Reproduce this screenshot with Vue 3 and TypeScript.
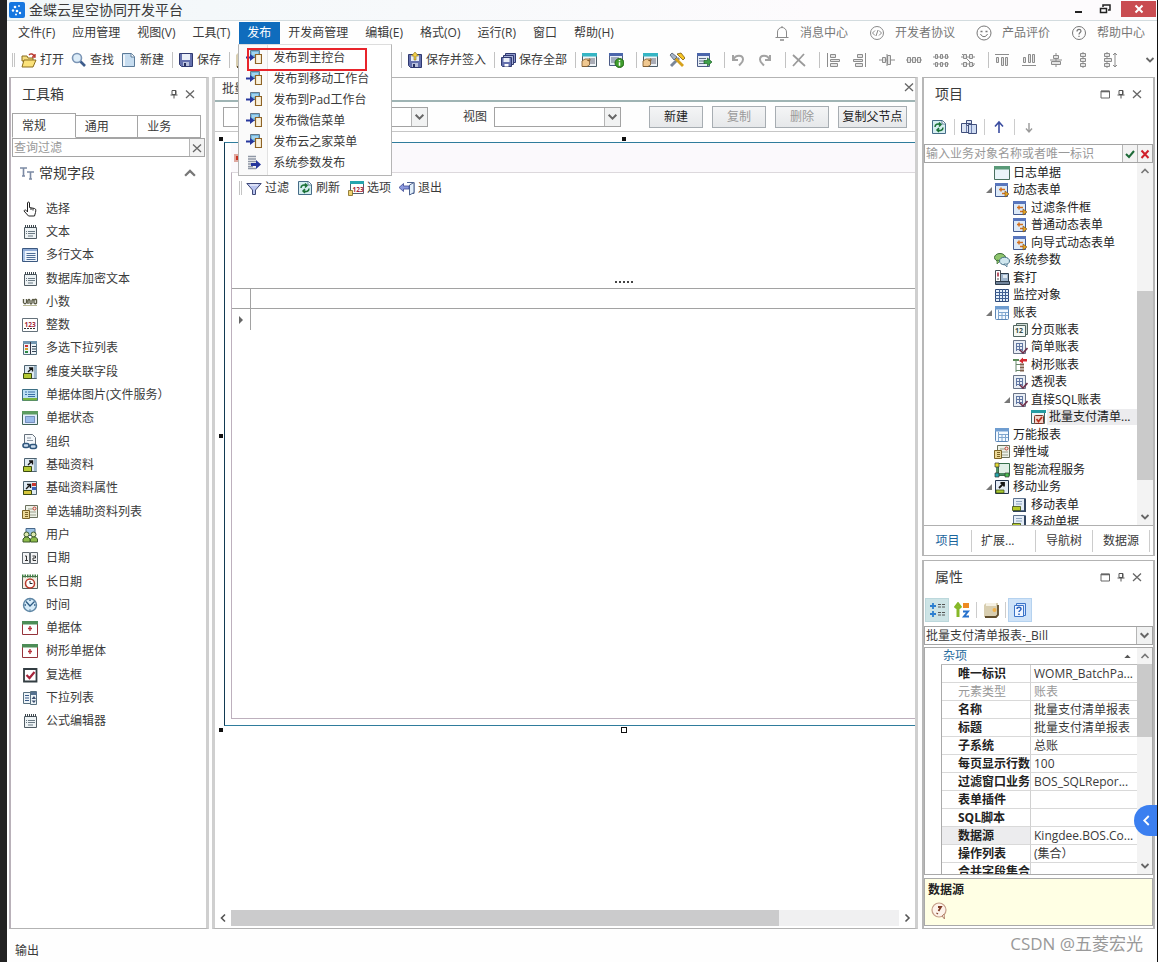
<script setup lang="ts">
import { ref } from 'vue'

interface TreeRow {
  label: string
  icon: string
  level: number
  open?: boolean
  selected?: boolean
}
interface PropRow {
  name: string
  value: string
  muted?: boolean
  selected?: boolean
}

const menusBefore = ['文件(F)', '应用管理', '视图(V)', '工具(T)']
const menusAfter = ['开发商管理', '编辑(E)', '格式(O)', '运行(R)', '窗口', '帮助(H)']
const links = [
  { icon: 'bell', label: '消息中心' },
  { icon: 'code', label: '开发者协议' },
  { icon: 'smile', label: '产品评价' },
  { icon: 'help', label: '帮助中心' },
]
const publishItems = [
  { icon: 'publish', label: '发布到主控台' },
  { icon: 'publish', label: '发布到移动工作台' },
  { icon: 'publish', label: '发布到Pad工作台' },
  { icon: 'publish', label: '发布微信菜单' },
  { icon: 'publish', label: '发布云之家菜单' },
  { icon: 'sysparam', label: '系统参数发布' },
]
const iconGroups = [
  ['formhand', 'docinfo'],
  ['formhand', 'tools', 'docarrow'],
  ['undo', 'redo'],
  ['cross'],
  ['al-left', 'al-right', 'al-center', 'al-hgap', 'al-hgrow', 'al-hshrink'],
  ['al-top', 'al-bottom', 'al-middle', 'al-vgap', 'al-vgrow'],
]
const tools = [
  ['hand', '选择'],
  ['note', '文本'],
  ['lines', '多行文本'],
  ['note', '数据库加密文本'],
  ['decimal', '小数'],
  ['num', '整数'],
  ['multilist', '多选下拉列表'],
  ['assoc', '维度关联字段'],
  ['image', '单据体图片(文件服务）'],
  ['status', '单据状态'],
  ['org', '组织'],
  ['assoc', '基础资料'],
  ['baseattr', '基础资料属性'],
  ['aux', '单选辅助资料列表'],
  ['user', '用户'],
  ['date', '日期'],
  ['longdate', '长日期'],
  ['clock', '时间'],
  ['entry', '单据体'],
  ['entry', '树形单据体'],
  ['checkbox', '复选框'],
  ['droplist', '下拉列表'],
  ['note', '公式编辑器'],
]
const tree: TreeRow[] = [
  { label: '日志单据', icon: 'window', level: 0 },
  { label: '动态表单', icon: 'dynform', level: 0, open: true },
  { label: '过滤条件框', icon: 'dynform', level: 1 },
  { label: '普通动态表单', icon: 'dynform', level: 1 },
  { label: '向导式动态表单', icon: 'dynform', level: 1 },
  { label: '系统参数', icon: 'chat', level: 0 },
  { label: '套打', icon: 'print', level: 0 },
  { label: '监控对象', icon: 'monitor', level: 0 },
  { label: '账表', icon: 'sheet', level: 0, open: true },
  { label: '分页账表', icon: 'pages', level: 1 },
  { label: '简单账表', icon: 'tablecheck', level: 1 },
  { label: '树形账表', icon: 'treesheet', level: 1 },
  { label: '透视表', icon: 'tablecheck', level: 1 },
  { label: '直接SQL账表', icon: 'tablecheck', level: 1, open: true },
  { label: '批量支付清单...', icon: 'report', level: 2, selected: true },
  { label: '万能报表', icon: 'sheet', level: 0 },
  { label: '弹性域', icon: 'aux', level: 0 },
  { label: '智能流程服务', icon: 'flow', level: 0 },
  { label: '移动业务', icon: 'mobile', level: 0, open: true },
  { label: '移动表单', icon: 'mobform', level: 1 },
  { label: '移动单据', icon: 'mobform', level: 1 },
]
const props: PropRow[] = [
  { name: '唯一标识', value: 'WOMR_BatchPa...' },
  { name: '元素类型', value: '账表', muted: true },
  { name: '名称', value: '批量支付清单报表' },
  { name: '标题', value: '批量支付清单报表' },
  { name: '子系统', value: '总账' },
  { name: '每页显示行数', value: '100' },
  { name: '过滤窗口业务', value: 'BOS_SQLRepor...' },
  { name: '表单插件', value: '' },
  { name: 'SQL脚本', value: '' },
  { name: '数据源', value: 'Kingdee.BOS.Co...', selected: true },
  { name: '操作列表', value: '(集合）' },
  { name: '合并字段集合', value: '' },
]
const toolTab = ref('常规')
const projectTab = ref('项目')
const toolQuery = ref('')
const projectQuery = ref('')
</script>

<template>
  <div class="app">
    <svg class="sprite" aria-hidden="true">
      <defs>
        <symbol id="i-open" viewBox="0 0 16 16"><path d="M1 4h5l1 2h5v3H1z" fill="#f3dc7e" stroke="#8a6d1c" /><path d="M3 8h12l-3 7H1z" fill="#fbe27a" stroke="#8a6d1c" /><path d="M8 3c2-2 4-1 5 1m1-2v3h-3" fill="none" stroke="#b8332a" stroke-width="1.4" /></symbol>
        <symbol id="i-find" viewBox="0 0 16 16"><circle cx="6" cy="6" r="4.500" fill="#dcecf8" stroke="#7b95b5" stroke-width="1.600" /><path d="M9.500 9.500L14 14" stroke="#3d5c8c" stroke-width="2.600" /></symbol>
        <symbol id="i-new" viewBox="0 0 16 16"><path d="M1.500 1.500h9l3 3v10h-12z" fill="#c6dcef" stroke="#5b7a98" /><path d="M10 1.500v3.500h3.500" fill="#fff" stroke="#5b7a98" /><path d="M3 3v11" stroke="#fff" stroke-width="1.500" /></symbol>
        <symbol id="i-save" viewBox="0 0 16 16"><path d="M1.500 1.500h13v13h-11l-2-2z" fill="#6470ad" stroke="#2f3970" /><path d="M4 2h8v6H4z" fill="#e9eef8" /><path d="M5 10h6v4H5z" fill="#b9c1dd" /><path d="M6 11h2v3H6z" fill="#28305f" /></symbol>
        <symbol id="i-checkin" viewBox="0 0 16 16"><path d="M1.500 2.500h13v13h-11l-2-2z" fill="#6470ad" stroke="#2f3970" /><path d="M4 3h8v6H4z" fill="#e9eef8" /><path d="M5 11h6v4H5z" fill="#b9c1dd" /><path d="M6 12h2v3H6z" fill="#28305f" /><path d="M8 0l3.500 4H9v4H7V4H4.500z" fill="#f0cd45" stroke="#8e731d" stroke-width=".6" /></symbol>
        <symbol id="i-saveall" viewBox="0 0 16 16"><path d="M5.500 1.500h10v9h-10z" fill="#8d98cb" stroke="#2f3970" /><path d="M3.500 3.500h10v9h-10z" fill="#a5afd8" stroke="#2f3970" /><path d="M1.500 5.500h10v9h-9l-1-1z" fill="#6470ad" stroke="#2f3970" /><path d="M3.500 6h6v4h-6z" fill="#e9eef8" /><path d="M4.500 12h4v2.500h-4z" fill="#fff" /></symbol>
        <symbol id="i-formhand" viewBox="0 0 16 16"><path d="M1.500 1.500h14v13h-14z" fill="#eef3f6" stroke="#4b5b66" /><path d="M1 1h15v3.500H1z" fill="#35b5c4" /><path d="M8 7h6M9 9h5M9 11h5" stroke="#667" /><path d="M1 9l3-2h5v1.500H6.500l2 .5v4L6 14.500H1z" fill="#f0c890" stroke="#7a5222" stroke-width=".8" /></symbol>
        <symbol id="i-docinfo" viewBox="0 0 16 16"><path d="M1.500 1.500h13v12h-13z" fill="#e6edf7" stroke="#4b5b86" /><path d="M1 1h14v3H1z" fill="#4b66ab" /><path d="M3 6h8M3 8h6M3 10h5" stroke="#5c6d85" /><circle cx="11.500" cy="11" r="4.500" fill="#3f9d2c" stroke="#226417" /><path d="M11.500 8v1.200M11.500 10.200v3.500" stroke="#fff" stroke-width="1.500" /></symbol>
        <symbol id="i-tools" viewBox="0 0 16 16"><path d="M2 14l8-8" stroke="#7a8698" stroke-width="3" /><path d="M14 14L5 5" stroke="#d6a11c" stroke-width="2.800" /><path d="M1 3l2-2 5 4-3 3z" fill="#a7b5c8" stroke="#4d5a6b" stroke-width=".8" /><path d="M8 2l4-1 4 5-2 2-4-4z" fill="#f7c526" stroke="#7b5b10" stroke-width=".8" /></symbol>
        <symbol id="i-docarrow" viewBox="0 0 16 16"><path d="M1.500 1.500h12v13h-12z" fill="#e6edf7" stroke="#4b5b86" /><path d="M1 1h13v3H1z" fill="#4b66ab" /><path d="M3 6.500h7M3 9h6M3 11.500h6" stroke="#5c6d85" /><path d="M8 8.500h3.500V6L16 10l-4.500 4v-2.500H8z" fill="#3fa04a" stroke="#1d6427" stroke-width=".7" /></symbol>
        <symbol id="i-undo" viewBox="0 0 16 16"><path d="M3 3v5h5M3.500 7.500c2-5 9.500-5 9.500 0 0 3-2 4-4 6" fill="none" stroke="#a3a3a3" stroke-width="2" /></symbol>
        <symbol id="i-redo" viewBox="0 0 16 16"><path d="M13 3v5H8M12.500 7.500c-2-5-9.500-5-9.500 0 0 3 2 4 4 6" fill="none" stroke="#a3a3a3" stroke-width="2" /></symbol>
        <symbol id="i-cross" viewBox="0 0 16 16"><path d="M2 3l12 11M13 2L2 14" stroke="#9a9a9a" stroke-width="1.800" /></symbol>
        <g fill="#e4e4e4" stroke="#8c8c8c">
          <symbol id="i-al-left" viewBox="0 0 16 16"><path d="M2.500 1v14" /><path d="M5.500 2.500h5v3h-5zM5.500 7.500h9v2h-9zM5.500 11.500h7v3h-7z" /></symbol>
          <symbol id="i-al-right" viewBox="0 0 16 16"><path d="M13.500 1v14" /><path d="M5.500 2.500h5v3h-5zM1.500 7.500h9v2h-9zM3.500 11.500h7v3h-7z" /></symbol>
          <symbol id="i-al-center" viewBox="0 0 16 16"><path d="M0 8h16M8 2v12" /><path d="M3.500 5.500h3v5h-3zM8.500 3.500h3v9h-3z" /></symbol>
          <symbol id="i-al-hgap" viewBox="0 0 16 16"><path d="M0 8h16" /><path d="M1.500 5.500h3v5h-3zM6.500 5.500h3v5h-3zM11.500 5.500h3v5h-3z" /></symbol>
          <symbol id="i-al-hgrow" viewBox="0 0 16 16"><path d="M0 5h16M0 12h16" /><path d="M2.500 2.500h2v4h-2zM7.500 2.500h2v4h-2zM12.500 2.500h2v4h-2zM2.500 10.500h2v4h-2zM7.500 10.500h2v4h-2zM12.500 10.500h2v4h-2z" /></symbol>
          <symbol id="i-al-hshrink" viewBox="0 0 16 16"><path d="M1 5h14M1 12h14M2 2l12 12" /><path d="M3.500 2.500h3v4h-3zM9.500 2.500h3v4h-3zM3.500 10.500h3v4h-3zM9.500 10.500h3v4h-3z" /></symbol>
          <symbol id="i-al-top" viewBox="0 0 16 16"><path d="M1 2.500h14" /><path d="M2.500 5.500h2v5h-2zM7.500 5.500h2v8h-2zM11.500 5.500h2v8h-2z" /></symbol>
          <symbol id="i-al-bottom" viewBox="0 0 16 16"><path d="M1 13.500h14" /><path d="M2.500 5.500h2v5h-2zM7.500 2.500h2v8h-2zM11.500 2.500h2v8h-2z" /></symbol>
          <symbol id="i-al-middle" viewBox="0 0 16 16"><path d="M8 1v14M2 8h12" /><path d="M5.500 3.500h5v3h-5zM3.500 9.500h9v3h-9z" /></symbol>
          <symbol id="i-al-vgap" viewBox="0 0 16 16"><path d="M8 0v16" /><path d="M5.500 1.500h5v3h-5zM5.500 6.500h5v3h-5zM5.500 11.500h5v3h-5z" /></symbol>
          <symbol id="i-al-vgrow" viewBox="0 0 16 16"><path d="M5 0v16M13 1v14M11 3l2-2 2 2M11 13l2 2 2-2" /><path d="M2.500 1.500h5v3h-5zM2.500 6.500h7v3h-7zM2.500 11.500h5v3h-5z" /></symbol>
        </g>
        <symbol id="i-bell" viewBox="0 0 16 16"><path d="M1.500 12.500h13M3.500 12V7a4.500 4.500 0 0 1 9 0v5M8 1v1.500" fill="none" stroke="#8a8a8a" /><path d="M6 15h4" stroke="#8a8a8a" stroke-width="1.500" /></symbol>
        <symbol id="i-code" viewBox="0 0 16 16"><circle cx="8" cy="8" r="6.500" fill="none" stroke="#8a8a8a" /><path d="M6 5.500L3.500 8 6 10.500M10 5.500L12.500 8 10 10.500M9 5l-2 6" fill="none" stroke="#8a8a8a" /></symbol>
        <symbol id="i-smile" viewBox="0 0 16 16"><circle cx="8" cy="8" r="7" fill="none" stroke="#777" /><path d="M4.500 9c1.500 3.500 5.500 3.500 7 0" fill="none" stroke="#777" /><path d="M4.500 6.500h2M9.500 6.500h2" stroke="#777" stroke-width="1.300" /></symbol>
        <symbol id="i-help" viewBox="0 0 16 16"><circle cx="8" cy="8" r="6.500" fill="none" stroke="#777" /><path d="M6 6.500c0-3 4-2.500 4-.5 0 1.500-2 1.500-2 3.500M8 10.800v1.200" fill="none" stroke="#777" stroke-width="1.200" /></symbol>
        <symbol id="i-publish" viewBox="0 0 16 16"><path d="M4.500.5h9v7h-9z" fill="#72b5dc" stroke="#66798a" /><path d="M6 2h6v3H6z" fill="#a3d4ef" /><path d="M9.500 4.500h6v9h-6z" fill="#fbf3df" stroke="#8e6325" stroke-width="1.200" /><path d="M0 6.500h4V4l4.500 3.500L4 11V8.500H0z" fill="#26379d" /></symbol>
        <symbol id="i-sysparam" viewBox="0 0 16 16"><path d="M2 1.500h8M2 4h8M2 6.500h8M2 9h5M2 11.500h5M2 13.500h8" stroke="#8f97a5" stroke-width="1.300" /><path d="M5 8h5V5l5 4.500-5 4.500v-3H5z" fill="#26379d" /></symbol>
        <symbol id="i-funnel" viewBox="0 0 16 16"><path d="M.8 3.500h14.400L9.500 10v4.500h-3V10z" fill="#b9c4ef" stroke="#404a78" /><path d="M4 5h8" stroke="#fff" /></symbol>
        <symbol id="i-refresh" viewBox="0 0 16 16"><path d="M1.500 1.500h10l3 3v10h-13z" fill="#d5eef0" stroke="#466c88" /><path d="M11 1.500v3.500h3.500" fill="#fff" stroke="#466c88" stroke-width=".8" /><path d="M4 8c0-3 3-3.500 5-2.500M8 3.500l2 2-2 2M12 8.500c0 3-3 3.500-5 2.500M8 9l-2 2 2 2" fill="none" stroke="#1a7136" stroke-width="1.500" /></symbol>
        <symbol id="i-options" viewBox="0 0 16 16"><path d="M2.500 1.500h13v12h-13z" fill="#fff" stroke="#52606b" /><path d="M2 1h14v3H2z" fill="#25a5ae" /><text x="4.500" y="11.500" font-size="6.500" font-weight="700" fill="#a11f35">123</text><path d="M.5 10.500h4v5h-4z" fill="#efd374" stroke="#7e661d" stroke-width=".8" /></symbol>
        <symbol id="i-exit" viewBox="0 0 16 16"><path d="M8 2.500h7v11h-2" fill="none" stroke="#4f6491" /><path d="M15 2.500l-4.500 2.500v10l4.500-2.500z" fill="#e3effa" stroke="#4f6491" /><path d="M0 7.500L4.500 3.500v2.500H10v3H4.500v2.500z" fill="#8c9ade" stroke="#3f4a94" stroke-width=".8" /></symbol>
        <symbol id="i-tt" viewBox="0 0 16 16"><path d="M1 3h7M4.500 3v8M3 11h3" stroke="#7c8aa4" stroke-width="1.600" /><path d="M8 7h7M11.500 7v7M10 14h3" stroke="#7c8aa4" stroke-width="1.600" /></symbol>
        <symbol id="i-hand" viewBox="0 0 16 16"><path d="M5.500 9V2c0-1.300 2-1.300 2 0v4.500l5 1c1.500.5 1.500 1.500 1 4l-1 3.500H6.500L2 10c.5-1.500 2-1.500 3.500 1z" fill="#fff" stroke="#222" /><path d="M9 7v2M11 7.500v2" stroke="#222" /></symbol>
        <symbol id="i-note" viewBox="0 0 16 16"><path d="M2.500 3.500h12v11h-12z" fill="#edf2f4" stroke="#4f5a62" /><path d="M3.500 1v3M5.500 1v3M7.500 1v3M9.500 1v3M11.500 1v3M13.500 1v3" stroke="#404a50" /><path d="M4 7.500h1M6 7.500h7M4 9.500h1M6 9.500h7M6 12h5" stroke="#6b7a85" /></symbol>
        <symbol id="i-lines" viewBox="0 0 16 16"><path d="M.5 1.500h15v13H.5z" fill="#eff5fc" stroke="#3b5880" /><path d="M1 2h14v2H1z" fill="#8fabd6" /><path d="M1 4h2v10H1z" fill="#a9c3e6" /><path d="M4.500 6.500h9M4.500 8.500h9M4.500 10.500h9M4.500 12.500h9" stroke="#4e6d96" /></symbol>
        <symbol id="i-decimal" viewBox="0 0 16 16"><path d="M1.500 5v3.500q1.500 2.500 3 0V5M6 10V6.500q1-2 2 0V9q1 2 2 0V6.500q1-2 2 0V9q1.500 1.500 2.500 0V6q-1-1.500-2 0" fill="none" stroke="#5a5a44" stroke-width="1.400" /><path d="M1 11.500h14" stroke="#b9b896" /></symbol>
        <symbol id="i-num" viewBox="0 0 16 16"><path d="M.5 1.500h15v13H.5z" fill="#fff" stroke="#64717a" /><text x="2.500" y="9.500" font-size="6.500" font-weight="700" fill="#a11f35">123</text><path d="M2 11.500h12" stroke="#333" stroke-dasharray="2 1" /></symbol>
        <symbol id="i-multilist" viewBox="0 0 16 16"><path d="M1.500 1.500h13v13h-13z" fill="#edf4f8" stroke="#57707f" /><path d="M1 1h14v3H1z" fill="#7296b0" /><path d="M8.500 2v12" stroke="#334" /><path d="M3 6h3" stroke="#c33" stroke-width="2" /><path d="M3 9h3" stroke="#d69a28" stroke-width="2" /><path d="M3 12h3" stroke="#2c8a45" stroke-width="2" /><path d="M10 6.500h4M10 9h4M10 11.500h4" stroke="#345" /></symbol>
        <symbol id="i-assoc" viewBox="0 0 16 16"><path d="M2.500 1.500h12v13h-12z" fill="#dfeaf2" stroke="#4d6270" /><path d="M12 2h3v12h-3z" fill="#9fb8ca" /><path d="M6 8l4-4M7 4h3.500v3.500" fill="none" stroke="#151515" stroke-width="1.400" /><path d="M1.500 9.500h8v5h-8z" fill="#b4c934" stroke="#3b4b10" /></symbol>
        <symbol id="i-image" viewBox="0 0 16 16"><path d="M.5 2.500h15v11H.5z" fill="#bde0f4" stroke="#3d6f84" /><path d="M1 11h14v2.500H1z" fill="#78b441" /><path d="M3 5h2M6 5h7M3 7.500h2M6 7.500h7M6 9.500h7" stroke="#3a6fa5" /></symbol>
        <symbol id="i-status" viewBox="0 0 16 16"><path d="M.5 1.500h15v13H.5z" fill="#e3eefc" stroke="#3f6256" /><path d="M0 1h16v3.500H0z" fill="#5d9c61" /><path d="M3.500 6.500h9v6h-9z" fill="#9bbbea" stroke="#2e4d86" stroke-dasharray="1 1" /></symbol>
        <symbol id="i-org" viewBox="0 0 16 16"><path d="M2.500.5h8l3 3v9h-11z" fill="#f5f8fb" stroke="#66717c" /><path d="M5 4h4M5 6.500h6" stroke="#8a96a3" /><rect x="1" y="9.500" width="6" height="4" rx="2" fill="#cde" stroke="#2f567c" stroke-width="1.600" /><rect x="8" y="10.500" width="6.500" height="4" rx="2" fill="#cde" stroke="#2f567c" stroke-width="1.600" /></symbol>
        <symbol id="i-baseattr" viewBox="0 0 16 16"><path d="M1.500 1.500h13v13h-13z" fill="#dfeaf2" stroke="#4d6270" /><path d="M4 9l4-4M5 4.500h3.500V8" fill="none" stroke="#151515" stroke-width="1.400" /><path d="M10 3h4v3h-4z" fill="#c9362f" /><path d="M10 7h4v3h-4z" fill="#3c5fb8" /><path d="M1.500 10.500h8v4h-8z" fill="#d6c63c" stroke="#3b4b10" /></symbol>
        <symbol id="i-aux" viewBox="0 0 16 16"><path d="M3.500 1.500h12v12h-12z" fill="#eef2e8" stroke="#6a705e" /><path d="M6 5h5M8 8h6M8 11h6" stroke="#9a9f8c" /><circle cx="12.500" cy="4.500" r="1.500" fill="none" stroke="#c23b30" /><path d="M.5 6.500h7v8h-7z" fill="#ecd897" stroke="#7d6426" /><path d="M3 8.500h3M3 10.500h3M3 12.500h3" stroke="#7d6426" /></symbol>
        <symbol id="i-user" viewBox="0 0 16 16"><path d="M4 1.500h9v7H4z" fill="#9dc2e4" stroke="#48688b" /><circle cx="4.500" cy="7.500" r="2.500" fill="#dce8b0" stroke="#3c5a2b" /><path d="M1 15v-3l2-2h3l2 2v3z" fill="#8dbb4b" stroke="#3c5a2b" /><circle cx="11.500" cy="7.500" r="2.500" fill="#dce8b0" stroke="#3c5a2b" /><path d="M8.500 15v-3l2-2h3l2 2v3z" fill="#8dbb4b" stroke="#3c5a2b" /></symbol>
        <symbol id="i-date" viewBox="0 0 16 16"><path d="M.5 2.500h7v11h-7zM8.500 2.500h7v11h-7z" fill="#f2f3f4" stroke="#626a70" /><path d="M3 6h1.500v4M3 10.500h3M10.500 6h3v2H11v2.500h3" fill="none" stroke="#333" /></symbol>
        <symbol id="i-longdate" viewBox="0 0 16 16"><path d="M.5 2.500h15v12H.5z" fill="#f5eee4" stroke="#55605a" /><path d="M0 2h16" stroke="#3f8142" stroke-width="3" stroke-dasharray="1.500 1" /><circle cx="8" cy="9.500" r="4.500" fill="#fff" stroke="#b93a2b" stroke-width="1.500" /><path d="M8 7v2.500h2.500" fill="none" stroke="#222" /></symbol>
        <symbol id="i-clock" viewBox="0 0 16 16"><circle cx="8" cy="8" r="6.500" fill="#d6ebf8" stroke="#5e86a5" stroke-width="1.400" /><path d="M4 4.500L8 9l4.500-4.500M8 2.500v1.500M8 12.500v1M2.500 8H4M12 8h1.500" fill="none" stroke="#2e5c84" stroke-width="1.300" /></symbol>
        <symbol id="i-entry" viewBox="0 0 16 16"><path d="M.5 1.500h15v13H.5z" fill="#fff" stroke="#96333b" /><path d="M0 1h16v3.500H0z" fill="#4d8d57" /><path d="M8 6v5M6 8.500h4" stroke="#b7323b" stroke-width="1.400" /></symbol>
        <symbol id="i-checkbox" viewBox="0 0 16 16"><path d="M2 2h12.500v12.500H2z" fill="#fff" stroke="#333d42" stroke-width="1.800" /><path d="M4.500 8l3 3 5-6" fill="none" stroke="#a6243b" stroke-width="2.200" /></symbol>
        <symbol id="i-droplist" viewBox="0 0 16 16"><path d="M1.500 2.500h7v11h-7zM8.500 1.500h6v13h-6z" fill="#edf4f8" stroke="#57707f" /><path d="M9 2h6v3H9z" fill="#55718f" /><path d="M3 5.500h4M3 8h4M3 10.500h4" stroke="#3b5b88" /><path d="M9.500 9L12 6l2 3zM9.500 10.500h4.500L12 13z" fill="#3b4f70" /></symbol>
        <symbol id="i-window" viewBox="0 0 16 16"><path d="M.5 1.500h15v13H.5z" fill="#eaf4fa" stroke="#48705f" /><path d="M0 1h16v3.500H0z" fill="#5a9a78" /></symbol>
        <symbol id="i-dynform" viewBox="0 0 16 16"><path d="M1.500 1.500h12v13h-12z" fill="#dce9f8" stroke="#41598f" /><path d="M1 1h13v3H1z" fill="#5876bd" /><path d="M5 7.500h6M7 5.500v4M8 11.500h5" stroke="#d3701d" stroke-width="1.500" /><path d="M11 9l4 3-4 3z" fill="#e8a824" stroke="#7a4a12" stroke-width=".6" /></symbol>
        <symbol id="i-chat" viewBox="0 0 16 16"><ellipse cx="6" cy="5.500" rx="5.500" ry="4" fill="#8fc56d" stroke="#3b6b36" /><path d="M3 8v4l3-3z" fill="#8fc56d" stroke="#3b6b36" stroke-width=".7" /><ellipse cx="10.500" cy="9" rx="5" ry="3.800" fill="#cfe6ee" stroke="#456f86" /><path d="M10 12l3 3v-3z" fill="#cfe6ee" stroke="#456f86" stroke-width=".7" /></symbol>
        <symbol id="i-print" viewBox="0 0 16 16"><path d="M6.500 3.500h8v8h-8z" fill="#9fb5cc" stroke="#2d3b4b" /><path d="M1.500.5h5v12h-5z" fill="#fff" stroke="#444c55" /><path d="M4 2.500v4" stroke="#a11f35" stroke-width="1.500" /><path d="M3 9h2" stroke="#555" /><path d="M1.500 11.500h14v3h-14z" fill="#70839a" stroke="#2d3b4b" /><path d="M9 5h4v3H9z" fill="#dfe9f2" /></symbol>
        <symbol id="i-monitor" viewBox="0 0 16 16"><path d="M1.500 2.500h13v12h-13z" fill="#e3effa" stroke="#2f4a78" /><path d="M5.500 2v12M8.500 2v12M11.500 2v12M1 5.500h14M1 8.500h14M1 11.500h14" stroke="#3f5f92" /></symbol>
        <symbol id="i-sheet" viewBox="0 0 16 16"><rect x="1.500" y="1.500" width="13" height="13" rx="1" fill="#f3f9ff" stroke="#5b86b6" /><path d="M1 1h14v3.500H1z" fill="#6f9dd0" /><path d="M4.500 5v9M8 7v7M11.500 7v7M4 7.500h10M4 10.500h10" stroke="#7fa6cf" /></symbol>
        <symbol id="i-pages" viewBox="0 0 16 16"><path d="M4.500 1.500h11v11h-11z" fill="#cfdad5" stroke="#526660" /><path d="M1.500 3.500h12v11h-12z" fill="#f4f8f4" stroke="#526660" /><text x="3" y="11" font-size="7" font-weight="700" fill="#3b4b46">12</text></symbol>
        <symbol id="i-tablecheck" viewBox="0 0 16 16"><path d="M1.500 1.500h12v13h-12z" fill="#e8edf4" stroke="#6a7488" /><path d="M4.500 4v8M7.500 4v8M10.500 4v8M4 4.500h7M4 7.500h7M4 10.500h7" stroke="#6177a3" /><path d="M8 11l3 3 4.500-5" fill="none" stroke="#6e2f4a" stroke-width="1.600" /></symbol>
        <symbol id="i-treesheet" viewBox="0 0 16 16"><path d="M4 4v11M4 7.500h4M4 13.500h4" fill="none" stroke="#68866b" /><path d="M1 3h6" stroke="#5c8a58" stroke-width="2" /><path d="M8 7.500h4M8 10.500h4M8 13.500h4" stroke="#7d5f4c" stroke-width="2" /><path d="M7 4l4-3.500V2h4v2.500h-4V6.500z" fill="#d3262e" /></symbol>
        <symbol id="i-report" viewBox="0 0 16 16"><path d="M1.500 1.500h13v13h-13z" fill="#eef5f5" stroke="#466" /><path d="M1 1h15v3H1z" fill="#259ba1" /><rect x="4.500" y="6.500" width="9" height="8" rx="1" fill="#f2d3c7" stroke="#7b3326" /><path d="M6.500 10l2 2.500L12 8" fill="none" stroke="#b8321f" stroke-width="1.800" /></symbol>
        <symbol id="i-flow" viewBox="0 0 16 16"><path d="M4.500 1.500h11v12h-11z" fill="#e2f0e7" stroke="#37704b" /><path d="M3 3v9h10" fill="none" stroke="#1b6a36" stroke-width="1.500" /><path d="M1 1h4v4H1z" fill="#e4dc31" stroke="#333" stroke-width=".7" /><path d="M1 11h4v4H1z" fill="#27a9ad" stroke="#333" stroke-width=".7" /><path d="M11 11h4v4h-4z" fill="#4bbf4f" stroke="#333" stroke-width=".7" /></symbol>
        <symbol id="i-mobile" viewBox="0 0 16 16"><path d="M1.500 1.500h13v13h-13z" fill="#e4ebf5" stroke="#24344e" /><path d="M5 9l5-5M6.500 4H10v3.500" fill="none" stroke="#151515" stroke-width="1.800" /><path d="M2 11h8v3H2z" fill="#a9c934" stroke="#3b4b10" stroke-width=".7" /></symbol>
        <symbol id="i-mobform" viewBox="0 0 16 16"><path d="M1.500 1.500h12v12h-12z" fill="#e4edf7" stroke="#5d728e" /><path d="M12 2h2v13h-2z" fill="#32455f" /><path d="M4 4.500h6M4 7h6" stroke="#8da2bd" /><path d="M.5 9.500h8v4h-8z" fill="#b5c92a" stroke="#3b4b10" stroke-width=".8" /><path d="M1 14.500h13" stroke="#32455f" /></symbol>
        <symbol id="i-clone" viewBox="0 0 16 16"><path d="M.5 4.500h9v9h-9zM5.500 1.500h5v5h-5z" fill="#dce4f3" stroke="#404f7c" /><path d="M7.500 5.500h8v9h-8z" fill="#cfdcf2" stroke="#404f7c" /><path d="M10.500 6v8M5.500 7v6" stroke="#6d7eae" /></symbol>
        <symbol id="i-up" viewBox="0 0 16 16"><path d="M8 14V3M4 7.500L8 3l4 4.500" fill="none" stroke="#3b4da0" stroke-width="1.600" /></symbol>
        <symbol id="i-down" viewBox="0 0 16 16"><path d="M8 4v9M5 9.500l3 3.500 3-3.500" fill="none" stroke="#9a9a9a" stroke-width="1.400" /></symbol>
        <symbol id="i-categories" viewBox="0 0 16 16"><path d="M1 4h6M4 1v6M1 12h6M4 9v6" stroke="#2c7fd0" stroke-width="1.800" /><path d="M9 2.500h3M13 2.500h3M9 5h3M13 5h3M9 10.500h3M13 10.500h3M9 13h3M13 13h3" stroke="#555" /></symbol>
        <symbol id="i-sort" viewBox="0 0 16 16"><path d="M4 15V5M1 6l3-4 3 4" fill="none" stroke="#86b828" stroke-width="3" /><path d="M9 1h6v5H9z" fill="#ee8a22" /><path d="M9 9.500h5l-4 5h5" fill="none" stroke="#2671cd" stroke-width="2" /></symbol>
        <symbol id="i-page" viewBox="0 0 16 16"><path d="M1 3l2-2h12v12l-2 2H1z" fill="#d8ceb0" /><path d="M3 1h10v3H3z" fill="#f5f1e4" /><path d="M2 15h11l2-2V3" fill="none" stroke="#5f4d2c" stroke-width="1.800" /><circle cx="11.500" cy="8" r="2" fill="#f0b14b" /></symbol>
        <symbol id="i-proptip" viewBox="0 0 16 16"><path d="M4.500 1.500h9v12h-9z" fill="#d6e6ff" stroke="#3b74c8" /><path d="M2.500 3.500h9v11h-9z" fill="#eef5ff" stroke="#3b74c8" /><path d="M5 7c0-2.500 4-2.500 4 0 0 1.500-2 1.500-2 3M7 11.500v1.500" fill="none" stroke="#2c62bd" stroke-width="1.500" /></symbol>
        <symbol id="i-tip" viewBox="0 0 18 18"><circle cx="9" cy="8" r="7" fill="#fdf3ea" stroke="#c59d88" stroke-width="1.200" /><path d="M12 14l2.500 3-.5-5z" fill="#fdf3ea" stroke="#b5866e" /><path d="M8 5h3L8.500 9M7.500 11l-.5 1" fill="none" stroke="#7e3a24" stroke-width="1.800" /></symbol>
        <symbol id="i-pin" viewBox="0 0 10 10"><path d="M3 1.500h4v4H3zM1.500 6h7M5 6v3.500" fill="none" stroke="#555" /><path d="M6.500 1v5" stroke="#555" /></symbol>
        <symbol id="i-close" viewBox="0 0 10 10"><path d="M1 1.500l8 7.500M9 1.500L1 9" stroke="#666" stroke-width="1.300" /></symbol>
        <symbol id="i-max" viewBox="0 0 10 10"><path d="M1 2h8.500v7H1z" fill="none" stroke="#666" /><path d="M1 2.500h8.500" stroke="#666" stroke-width="1.600" /></symbol>
        <symbol id="i-chev-down" viewBox="0 0 10 10"><path d="M1.500 3L5 6.500 8.500 3" fill="none" stroke="#666" stroke-width="1.800" /></symbol>
        <symbol id="i-chev-up" viewBox="0 0 10 10"><path d="M1.500 7L5 3.500 8.500 7" fill="none" stroke="#777" stroke-width="1.600" /></symbol>
        <symbol id="i-chev-left" viewBox="0 0 10 10"><path d="M7 1.500L3.500 5 7 8.500" fill="none" stroke="#555" stroke-width="1.600" /></symbol>
        <symbol id="i-chev-right" viewBox="0 0 10 10"><path d="M3.500 1.500L7 5 3.500 8.500" fill="none" stroke="#555" stroke-width="1.600" /></symbol>
      </defs>
    </svg>

    <header class="titlebar">
      <svg class="logo" viewBox="0 0 16 16"><rect width="16" height="16" rx="2" fill="#1677e0" /><g fill="#fff"><circle cx="6" cy="5" r="1.300" /><circle cx="10" cy="4" r=".9" /><circle cx="4" cy="8.500" r="1.200" /><circle cx="8" cy="9" r="1.300" /><circle cx="7" cy="12.500" r="1" /><circle cx="11" cy="11" r="1.200" /></g></svg>
      <h1>金蝶云星空协同开发平台</h1>
      <div class="winbtns">
        <button class="winbtn" aria-label="最小化"><svg viewBox="0 0 12 12"><path d="M2 9h7" stroke="#222" stroke-width="2" /></svg></button>
        <button class="winbtn" aria-label="还原"><svg viewBox="0 0 12 12"><path d="M4 4V2h7v5H9" fill="none" stroke="#222" stroke-width="1.500" /><path d="M1.500 5.500h6v4h-6z" fill="none" stroke="#222" stroke-width="1.500" /></svg></button>
        <button class="winbtn red" aria-label="关闭"><svg viewBox="0 0 12 12"><path d="M2.500 2.500l7 7M9.500 2.500l-7 7" stroke="#fff" stroke-width="2" /></svg></button>
      </div>
    </header>

    <nav class="menubar">
      <button v-for="m in menusBefore" :key="m" class="menu">{{ m }}</button>
      <div class="menuwrap">
        <button class="menu active">发布</button>
        <div class="popup" role="menu">
          <button v-for="(p, i) in publishItems" :key="p.label" class="popitem" role="menuitem">
            <svg class="ic"><use :href="'#i-' + p.icon" /></svg>
            <span>{{ p.label }}</span>
            <i v-if="i === 0" class="marker"></i>
          </button>
        </div>
      </div>
      <button v-for="m in menusAfter" :key="m" class="menu">{{ m }}</button>
      <div class="links">
        <a v-for="l in links" :key="l.label" href="#"><svg class="ic"><use :href="'#i-' + l.icon" /></svg>{{ l.label }}</a>
      </div>
    </nav>

    <div class="toolbar">
      <i class="grip"></i>
      <button class="tb"><svg class="ic"><use href="#i-open" /></svg>打开</button>
      <button class="tb"><svg class="ic"><use href="#i-find" /></svg>查找</button>
      <button class="tb"><svg class="ic"><use href="#i-new" /></svg>新建</button>
      <i class="sep"></i>
      <button class="tb"><svg class="ic"><use href="#i-save" /></svg>保存</button>
      <i class="sep"></i>
      <div class="covered"><button class="ib" aria-label="页面"><svg class="ic"><use href="#i-page" /></svg></button></div>
      <i class="sep"></i>
      <button class="tb"><svg class="ic"><use href="#i-checkin" /></svg>保存并签入</button>
      <i class="sep"></i>
      <button class="tb"><svg class="ic"><use href="#i-saveall" /></svg>保存全部</button>
      <template v-for="(g, gi) in iconGroups" :key="gi">
        <i class="sep"></i>
        <button v-for="(n, ni) in g" :key="ni" class="ib" :class="{ al: n.startsWith('al-') }" :aria-label="n"><svg class="ic"><use :href="'#i-' + n" /></svg></button>
      </template>
      <button class="more" aria-label="更多"><svg class="s10"><use href="#i-chev-down" /></svg></button>
    </div>

    <main class="main">
      <aside class="panel toolbox">
        <div class="phead">
          <h2>工具箱</h2>
          <button aria-label="固定"><svg class="s10"><use href="#i-pin" /></svg></button>
          <button aria-label="关闭"><svg class="s10"><use href="#i-close" /></svg></button>
        </div>
        <div class="tabs">
          <button v-for="t in ['常规', '通用', '业务']" :key="t" :class="{ on: t === toolTab }" @click="toolTab = t">{{ t }}</button>
        </div>
        <div class="search">
          <input v-model="toolQuery" placeholder="查询过滤" aria-label="查询过滤" />
          <button aria-label="清除" @click="toolQuery = ''"><svg class="s10"><use href="#i-close" /></svg></button>
        </div>
        <button class="group">
          <svg class="ic"><use href="#i-tt" /></svg><span>常规字段</span>
          <svg class="s14"><use href="#i-chev-up" /></svg>
        </button>
        <ul class="tools">
          <li v-for="t in tools" :key="t[1]">
            <button><svg class="ic"><use :href="'#i-' + t[0]" /></svg>{{ t[1] }}</button>
          </li>
        </ul>
      </aside>

      <section class="center">
        <div class="doctabs">
          <button class="doctab">批量</button>
          <button class="docclose" aria-label="关闭"><svg class="s10"><use href="#i-close" /></svg></button>
        </div>
        <div class="viewbar">
          <div class="combo first"><select aria-label="布局"><option></option></select><svg class="s10"><use href="#i-chev-down" /></svg></div>
          <label for="view">视图</label>
          <div class="combo second"><select id="view"><option></option></select><svg class="s10"><use href="#i-chev-down" /></svg></div>
          <div class="actions">
            <button>新建</button>
            <button disabled>复制</button>
            <button disabled>删除</button>
            <button class="wide">复制父节点</button>
          </div>
        </div>
        <div class="canvas">
          <div class="frame">
            <i class="handle tl"></i><i class="handle tc"></i><i class="handle ml"></i><i class="handle bl"></i><i class="handle bc"></i>
            <div class="formtitle"><i class="formicon"></i></div>
            <div class="form">
              <div class="formbar">
                <i class="grip"></i>
                <button><svg class="ic"><use href="#i-funnel" /></svg>过滤</button>
                <button><svg class="ic"><use href="#i-refresh" /></svg>刷新</button>
                <button><svg class="ic"><use href="#i-options" /></svg>选项</button>
                <button><svg class="ic"><use href="#i-exit" /></svg>退出</button>
              </div>
              <div class="dots"><i v-for="n in 5" :key="n"></i></div>
              <div class="gridhead"><span></span></div>
              <div class="gridrow"><span><svg viewBox="0 0 6 8"><path d="M1 0l4 4-4 4z" fill="#666" /></svg></span></div>
            </div>
          </div>
        </div>
        <div class="hscroll">
          <button aria-label="向左"><svg class="s10"><use href="#i-chev-left" /></svg></button>
          <div class="track"><i></i></div>
          <button aria-label="向右"><svg class="s10"><use href="#i-chev-right" /></svg></button>
        </div>
      </section>

      <div class="right">
        <aside class="panel project">
          <div class="phead">
            <h2>项目</h2>
            <button aria-label="最大化"><svg class="s10"><use href="#i-max" /></svg></button>
            <button aria-label="固定"><svg class="s10"><use href="#i-pin" /></svg></button>
            <button aria-label="关闭"><svg class="s10"><use href="#i-close" /></svg></button>
          </div>
          <div class="ptools">
            <button aria-label="刷新"><svg class="ic"><use href="#i-refresh" /></svg></button><i></i>
            <button aria-label="复制"><svg class="ic"><use href="#i-clone" /></svg></button><i></i>
            <button aria-label="上移"><svg class="ic"><use href="#i-up" /></svg></button><i></i>
            <button aria-label="下移"><svg class="ic"><use href="#i-down" /></svg></button>
          </div>
          <div class="search">
            <input v-model="projectQuery" placeholder="输入业务对象名称或者唯一标识" aria-label="输入业务对象名称或者唯一标识" />
            <button aria-label="确定"><svg viewBox="0 0 10 10" class="s10"><path d="M1 5l3 3 5-6" fill="none" stroke="#1d6a38" stroke-width="2" /></svg></button>
            <button aria-label="清除" @click="projectQuery = ''"><svg viewBox="0 0 10 10" class="s10"><path d="M1.500 1.500l7 7.500M8.500 1.500l-7 7.500" stroke="#d0202b" stroke-width="2" /></svg></button>
          </div>
          <div class="scrollbox treebox">
            <ul class="tree" role="tree">
              <li v-for="r in tree" :key="r.label" role="treeitem" :style="{ paddingLeft: 60 + r.level * 18 + 'px' }">
                <span class="toggle"><svg v-if="r.open" viewBox="0 0 6 6"><path d="M6 0v6H0z" fill="#777" /></svg></span>
                <svg class="ic"><use :href="'#i-' + r.icon" /></svg>
                <span class="tlabel" :class="{ sel: r.selected }">{{ r.label }}</span>
              </li>
            </ul>
            <div class="vscroll v1">
              <button aria-label="向上"><svg class="s10"><use href="#i-chev-up" /></svg></button>
              <div class="track"><i></i></div>
              <button aria-label="向下"><svg class="s10"><use href="#i-chev-down" /></svg></button>
            </div>
          </div>
          <div class="btabs">
            <button v-for="t in ['项目', '扩展...', '导航树', '数据源']" :key="t" :class="{ on: t === projectTab }" @click="projectTab = t">{{ t }}</button>
          </div>
        </aside>

        <aside class="panel attrs">
          <div class="phead">
            <h2>属性</h2>
            <button aria-label="最大化"><svg class="s10"><use href="#i-max" /></svg></button>
            <button aria-label="固定"><svg class="s10"><use href="#i-pin" /></svg></button>
            <button aria-label="关闭"><svg class="s10"><use href="#i-close" /></svg></button>
          </div>
          <div class="atools">
            <button class="on teal" aria-label="分类"><svg class="ic"><use href="#i-categories" /></svg></button>
            <button aria-label="排序"><svg class="ic"><use href="#i-sort" /></svg></button><i></i>
            <button aria-label="页"><svg class="ic"><use href="#i-page" /></svg></button><i></i>
            <button class="on" aria-label="说明"><svg class="ic"><use href="#i-proptip" /></svg></button>
          </div>
          <div class="combo obj"><select aria-label="对象"><option>批量支付清单报表-_Bill</option></select><svg class="s10"><use href="#i-chev-down" /></svg></div>
          <div class="scrollbox propbox">
            <div class="props">
              <button class="cat"><span>杂项</span><svg viewBox="0 0 8 5"><path d="M0 5l4-4 4 4z" fill="#555" /></svg></button>
              <table>
                <tbody>
                  <tr v-for="p in props" :key="p.name" :class="{ muted: p.muted, sel: p.selected }">
                    <th scope="row">{{ p.name }}</th>
                    <td>{{ p.value }}</td>
                  </tr>
                </tbody>
              </table>
            </div>
            <div class="vscroll v2">
              <button aria-label="向上"><svg class="s10"><use href="#i-chev-up" /></svg></button>
              <div class="track"><i></i></div>
              <button aria-label="向下"><svg class="s10"><use href="#i-chev-down" /></svg></button>
            </div>
          </div>
          <div class="desc">
            <strong>数据源</strong>
            <svg class="s18"><use href="#i-tip" /></svg>
          </div>
        </aside>
      </div>
    </main>

    <footer class="footer"><span>输出</span></footer>
    <span class="watermark">CSDN @五菱宏光</span>
    <button class="fab" aria-label="展开"><svg viewBox="0 0 10 14"><path d="M7.500 2L2.500 7l5 5" fill="none" stroke="#fff" stroke-width="2" /></svg></button>
  </div>
</template>

<style>
body { margin: 0; background: #fff; }
</style>

<style scoped>
.app {
  position: relative;
  display: flex;
  flex-direction: column;
  min-height: 100vh;
  box-sizing: border-box;
  border-left: 7px solid #222;
  border-right: 1px solid #111;
  background: #fefefe;
  overflow: hidden;
  color: #3a3a3a;
  font: 12px/16px "Open Sans", "Noto Sans CJK SC", sans-serif;
}
.app * { box-sizing: border-box; }
.sprite { position: absolute; width: 0; height: 0; }
button, input, select { font: inherit; color: inherit; margin: 0; padding: 0; border: 0; background: none; border-radius: 0; }
button { display: flex; align-items: center; white-space: nowrap; }
svg { display: block; flex: none; }
h1, h2 { margin: 0; font-weight: 400; }
ul { margin: 0; padding: 0; list-style: none; }
a { color: inherit; text-decoration: none; }
.ic { width: 16px; height: 16px; }
.s10 { width: 10px; height: 10px; }
.s14 { width: 14px; height: 14px; }
.s18 { width: 18px; height: 18px; }

.titlebar { display: flex; align-items: center; height: 21px; padding-left: 2px; border-bottom: 1px solid #d3dcdf; background: linear-gradient(90deg, #f1f7f9, #fdfbfd 70%); }
.logo { width: 16px; height: 16px; }
.titlebar h1 { flex: 1; margin-left: 4px; font-size: 14px; line-height: 20px; }
.winbtns { display: flex; align-self: flex-start; height: 17px; }
.winbtn { width: 26px; justify-content: center; }
.winbtn svg { width: 12px; height: 12px; }
.winbtn.red { width: 35px; margin: 1px 1px 0 3px; background: #c94c51; justify-content: center; }

.menubar { display: flex; align-items: stretch; height: 23px; padding: 1px 12px 0 3px; }
.menu { height: 22px; padding: 0 9px 0 8px; }
.menuwrap { position: relative; }
.menu.active { background: #0f6cbd; color: #fff; }
.popup { position: absolute; z-index: 5; top: 22px; left: -1px; width: 154px; padding: 2px 0; border: 1px solid #b5b5b5; border-top-color: #ddd; background: linear-gradient(90deg, #fafafa 28px, #e2e2e2 28px, #e2e2e2 29px, #fff 29px); }
.popitem { position: relative; width: 100%; height: 21px; padding-left: 7px; gap: 11px; }
.marker { position: absolute; top: 1px; left: 8px; width: 120px; height: 23px; border: 2px solid #e8242b; }
.links { display: flex; gap: 21px; margin-left: auto; color: #777; }
.links a { display: flex; align-items: center; gap: 10px; white-space: nowrap; }

.toolbar { display: flex; align-items: center; height: 33px; padding: 0 0 2px 5px; }
.grip { width: 3px; height: 14px; border: 1px solid #c4c4c4; border-width: 0 1px; }
.toolbar .grip { margin-right: 2px; }
.tb { gap: 3px; padding: 0 3px 0 4px; height: 22px; }
.ib { padding: 0 7px 0 4px; height: 22px; }
.ib.al { fill: #e4e4e4; stroke: #8c8c8c; }
.sep { flex: none; width: 1px; height: 16px; margin: 0 1px 0 5px; background: #c2c2c2; }
.covered { display: flex; flex: none; width: 165px; }
.more { margin-left: auto; padding-right: 2px; }

.main { display: flex; flex: 1; padding: 0 2px; }
.panel { display: flex; flex-direction: column; border: 1px solid #b3b3b3; background: #fff; }
.phead { display: flex; align-items: center; gap: 6px; padding: 0 11px 2px; height: 34px; }
.phead h2 { flex: 1; font-size: 14px; line-height: 20px; }
.phead button { width: 10px; }

.toolbox { flex: none; width: 200px; padding: 0 1px 1px; border-left: 2px solid #b9b1b9; border-right: 3px solid #cfcfcf; }
.toolbox .phead { padding-left: 10px; padding-right: 10px; }
.tabs { display: flex; align-items: flex-end; height: 26px; margin-right: 4px; }
.tabs button { flex: 1; height: 23px; padding-left: 9px; border: 1px solid #a5a5a5; border-left: 0; }
.tabs button.on { height: 25px; border-left: 1px solid #a5a5a5; border-bottom-color: #fff; }
.search { display: flex; height: 19px; border: 1px solid #a5a5a5; background: #fff; }
.search input { flex: 1; min-width: 0; padding-left: 1px; outline: 0; }
.search input::placeholder { color: #999; opacity: 1; }
.search button { width: 15px; justify-content: center; border-left: 1px solid #b5b5b5; background: #f3f3f3; }
.group { height: 34px; padding: 0 8px 2px 7px; gap: 4px; font-size: 14px; }
.group span { flex: 1; text-align: left; }
.tools { display: grid; grid-auto-rows: 1fr; height: 536px; margin-top: 6px; }
.tools li { display: flex; }
.tools button { gap: 8px; padding-left: 10px; width: 100%; }

.center { display: flex; flex: 1; flex-direction: column; min-width: 0; margin: 0 4px 0 3px; border: 1px solid #b3b3b3; border-left: 3px solid #cfcfcf; border-right: 3px solid #cfcfcf; }
.doctabs { display: flex; height: 24px; border-bottom: 2px solid #9fb4b4; }
.doctab { width: 170px; padding-left: 7px; }
.docclose { margin-left: auto; padding: 0 1px 4px 0; }
.viewbar { display: flex; align-items: center; height: 30px; padding: 0 8px; border-bottom: 1px solid #c6c6c6; }
.combo { position: relative; display: flex; height: 20px; border: 1px solid #a3a3a3; background: #fff; }
.combo select { appearance: none; width: 100%; padding: 0 16px 0 1px; outline: 0; }
.combo svg { position: absolute; right: 0; top: 0; width: 16px; height: 100%; padding: 2px; border-left: 1px solid #b5b5b5; background: #f1f2f2; pointer-events: none; }
.first { width: 205px; }
.second { width: 127px; margin-left: 7px; }
.viewbar label { margin-left: 35px; }
.actions { display: flex; gap: 9px; margin-left: auto; }
.actions button { justify-content: center; width: 54px; height: 22px; border: 1px solid #a7adb2; background: linear-gradient(#f4f5f6, #e6e8ea); color: #222; }
.actions button:disabled { color: #9a9a9a; }
.actions .wide { width: 69px; }
.canvas { flex: 1; overflow: hidden; padding: 10px 0 0 9px; background: #fff; }
.frame { position: relative; width: 800px; height: 584px; padding: 0 7px 7px 6px; border: 1px solid #2f7c9c; border-left-color: #123a52; }
.handle { position: absolute; width: 4px; height: 4px; background: #111; }
.tl { left: -6px; top: -6px; }
.tc { left: 50%; top: -6px; margin-left: -2px; }
.ml { left: -6px; top: 50%; }
.bl { left: -6px; bottom: -7px; }
.bc { left: 50%; bottom: -8px; width: 6px; height: 6px; margin-left: -3px; border: 1px solid #111; background: #fff; }
.formtitle { display: flex; align-items: center; height: 29px; padding-left: 3px; background: #fbf9fc; }
.formicon { width: 8px; height: 8px; border: 2px solid #e0a9a0; background: #c93020; }
.form { height: 547px; border: 1px solid #bdb0bd; border-top-color: #dcd8dc; }
.formbar { display: flex; align-items: center; height: 30px; padding-left: 7px; gap: 8px; }
.formbar .grip { margin-right: -4px; }
.formbar button { gap: 3px; }
.dots { display: flex; justify-content: center; gap: 2px; margin: 78px 0 5px; }
.dots i { width: 2px; height: 2px; background: #444; }
.gridhead { display: flex; height: 21px; border: 1px solid #a2a2a2; border-width: 1px 0; }
.gridhead span, .gridrow span { display: flex; align-items: center; justify-content: center; width: 19px; border-right: 1px solid #a2a2a2; }
.gridrow { display: flex; height: 21px; }
.gridrow svg { width: 6px; height: 8px; }
.hscroll { display: flex; height: 18px; padding-bottom: 2px; background: #fff; }
.hscroll button { width: 16px; justify-content: center; }
.hscroll .track { flex: 1; background: #f0f0f1; }
.hscroll .track i { display: block; width: 82%; height: 100%; background: #cbcbcc; }

.right { display: flex; flex: none; flex-direction: column; width: 233px; gap: 4px; }
.right .panel { border-left: 2px solid #b7b7b7; border-right: 2px solid #b7b7b7; }
.project { height: 479px; }
.attrs { flex: 1; }
.ptools { display: flex; align-items: center; justify-content: space-between; width: 106px; height: 32px; margin-left: 7px; padding-bottom: 2px; }
.ptools i, .atools i { width: 1px; height: 16px; background: #ccc; }
.scrollbox { display: flex; overflow: hidden; }
.treebox { height: 363px; border-bottom: 1px solid #b0b0b0; }
.tree { display: grid; grid-auto-rows: 1fr; flex: 1; min-width: 0; height: 368px; padding-top: 1px; }
.tree li { display: flex; align-items: center; min-width: 0; white-space: nowrap; }
.toggle { width: 10px; padding-left: 2px; }
.toggle svg { width: 6px; height: 6px; }
.tlabel { margin-left: 1px; padding: 0 1px 0 2px; color: #222; }
.tlabel.sel { flex: 1; background: #ececee; }
.vscroll { display: flex; flex: none; flex-direction: column; width: 16px; background: #f3f3f3; }
.vscroll button { height: 16px; justify-content: center; }
.vscroll .track { flex: 1; }
.vscroll .track i { display: block; background: #cacaca; }
.v1 .track { padding-top: 112px; }
.v1 .track i { height: 189px; }
.v2 .track i { height: 73px; }
.btabs { display: flex; flex: 1; align-items: center; }
.btabs button { width: 57px; justify-content: center; height: 22px; border-right: 1px solid #ccc; }
.btabs button:nth-child(1) { width: 48px; }
.btabs button:nth-child(2) { width: 64px; justify-content: flex-start; padding-left: 9px; }
.btabs button.on { color: #1a649c; }

.atools { display: flex; align-items: center; gap: 3px; height: 31px; padding: 0 0 1px 2px; }
.atools button { width: 22px; height: 22px; justify-content: center; }
.atools .on { background: #cfe3f8; outline: 1px solid #b5d2ef; }
.atools .teal { background: #cde4e6; outline-color: #bcd8dc; }
.obj { height: 19px; }
.propbox { height: 228px; margin-top: 2px; border: 1px solid #a9a9a9; }
.propbox .vscroll { width: 15px; }
.props { flex: 1; min-width: 0; overflow: hidden; padding-left: 16px; }
.cat { width: 100%; height: 17px; padding: 0 6px 0 2px; justify-content: space-between; color: #276b9d; border-bottom: 1px solid #bbb; }
.cat svg { width: 7px; height: 4px; }
.props table { width: 100%; border-collapse: separate; border-spacing: 0; table-layout: fixed; border-left: 1px solid #aaa; }
.props th, .props td { height: 18px; padding: 0; border-bottom: 1px solid #d9d9d9; overflow: hidden; white-space: nowrap; text-align: left; line-height: 17px; }
.props th { width: 89px; padding-left: 16px; border-right: 1px solid #d0d0d0; color: #222; font-weight: 700; }
.props td { padding-left: 3px; }
.props .muted th, .props .muted td { color: #999; font-weight: 400; }
.props .sel th { background: #ececee; }
.desc { flex: 1; margin: 3px 0 2px; padding: 3px 3px 0; border: 1px solid #a9a9a9; background: #ffffe4; color: #222; }
.desc strong { display: block; }
.desc svg { margin: 4px 0 0 2px; }

.footer { display: flex; align-items: center; height: 33px; padding: 10px 8px 0; }
.watermark { position: absolute; right: 14px; bottom: 6px; font-size: 17px; line-height: 24px; color: #999; }
.fab { position: absolute; right: 0; top: 805px; z-index: 4; width: 23px; height: 31px; padding-left: 8px; border-radius: 16px 0 0 16px; background: #3b7ff0; }
.fab svg { width: 9px; height: 13px; }
</style>
